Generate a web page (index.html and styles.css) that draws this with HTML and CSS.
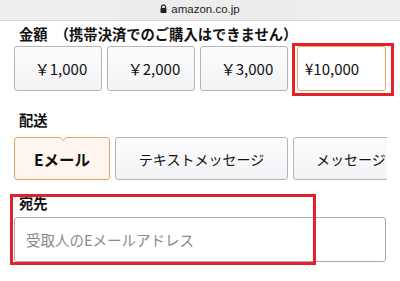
FILE: index.html
```html
<!DOCTYPE html>
<html lang="ja">
<head>
<meta charset="utf-8">
<link rel="stylesheet" href="styles.css">
</head>
<body>
<div class="urlbar">
  <svg class="lock" width="7" height="9" viewBox="0 0 7 9"><path d="M1.5 4V2.8a2 2 0 0 1 4 0V4" fill="none" stroke="#222" stroke-width="1.2"/><rect x="0.5" y="4" width="6" height="5" rx="0.8" fill="#222"/></svg>
  <span class="host">amazon.co.jp</span>
</div>
<main class="page">
  <h2 class="label label-amount">金額　（携帯決済でのご購入はできません）</h2>
  <div class="amounts">
    <button class="btn amt">￥1,000</button>
    <button class="btn amt">￥2,000</button>
    <button class="btn amt">￥3,000</button>
    <div class="mark mark-amount">
      <button class="btn amt amt-sel">¥10,000</button>
    </div>
  </div>
  <h2 class="label label-ship">配送</h2>
  <div class="ships">
    <button class="btn ship ship-sel">Eメール</button>
    <button class="btn ship ship-text">テキストメッセージ</button>
    <button class="btn ship ship-msg">メッセージ</button>
  </div>
  <div class="to">
    <h2 class="label label-to">宛先</h2>
    <div class="input">受取人のEメールアドレス</div>
    <div class="mark mark-to"></div>
  </div>
</main>
</body>
</html>
```
FILE: styles.css
```css
* { box-sizing: border-box; }
html, body { margin: 0; padding: 0; background: #fff; }
body {
  width: 400px; height: 281px; overflow: hidden;
  font-family: "Noto Sans CJK JP", "Noto Sans", sans-serif;
  color: #111;
}
.urlbar {
  height: 21px;
  background: linear-gradient(90deg, #f1eeee, #ececec 50%, #eeeeee);
  border-bottom: 1px solid #d6d6d6;
  display: flex; justify-content: center; align-items: center;
  gap: 4px;
  padding-bottom: 3px;
}
.lock { display: block; }
.host {
  font-family: "Liberation Sans", Arial, sans-serif;
  font-size: 11.5px; color: #222; line-height: 12px;
}
.page { padding: 0 14px; }
.label {
  margin: 0; font-size: 14.3px; font-weight: bold; line-height: 20px;
  padding-left: 5px; color: #111;
}
.label-amount { margin-top: 3px; }
.amounts {
  display: flex; gap: 5px; margin-top: 2px; height: 45px;
}
.btn {
  font-family: inherit;
  background: linear-gradient(#fcfcfd, #f2f3f5);
  border: 1px solid #b3b5b9;
  border-radius: 3px;
  color: #111;
  padding: 0;
  margin: 0;
}
.amt { width: 88px; height: 45px; font-size: 15px; padding-left: 6px; }
.mark { position: relative; }
.mark-amount { margin-left: 4px; }
.mark-amount::after {
  content: ""; position: absolute;
  left: -5px; top: -3px; right: -8px; bottom: -5px;
  border: 3px solid #e2212b;
  pointer-events: none;
}
.amt-sel {
  width: 89px; background: #fff; border-color: #e6a868;
  text-align: left; padding-left: 7px;
}
.label-ship { margin-top: 19px; }
.ships {
  display: flex; gap: 5px; margin-top: 7px; height: 43px;
  width: 373px; overflow: hidden;
}
.ship { height: 43px; font-size: 14px; flex: none; }
.ship-sel {
  width: 96px; position: relative;
  background: #fef6ee; border-color: #e3a469;
  font-weight: bold; font-size: 15.5px;
}
.ship-sel::before {
  content: ""; position: absolute; left: 44px; top: -1px;
  width: 0; height: 0;
  border-left: 4px solid transparent; border-right: 4px solid transparent;
  border-top: 4px solid #e3a469;
}
.ship-sel::after {
  content: ""; position: absolute; left: 45px; top: -1px;
  width: 0; height: 0;
  border-left: 3px solid transparent; border-right: 3px solid transparent;
  border-top: 3px solid #fff;
}
.ship-text { width: 173px; }
.ship-msg { width: 110px; text-align: left; padding-left: 22px; }
.to { position: relative; margin-top: 13px; }
.label-to { line-height: 20px; }
.input {
  margin-top: 4px; height: 45px;
  border: 1px solid #a9a9a9; border-radius: 3px;
  font-size: 14.5px; color: #8a8a8a;
  display: flex; align-items: center; padding-left: 11px;
}
.mark-to {
  position: absolute; left: -4px; top: 1px; width: 306px; height: 71px;
  border: 3px solid #e2212b;
}
```
